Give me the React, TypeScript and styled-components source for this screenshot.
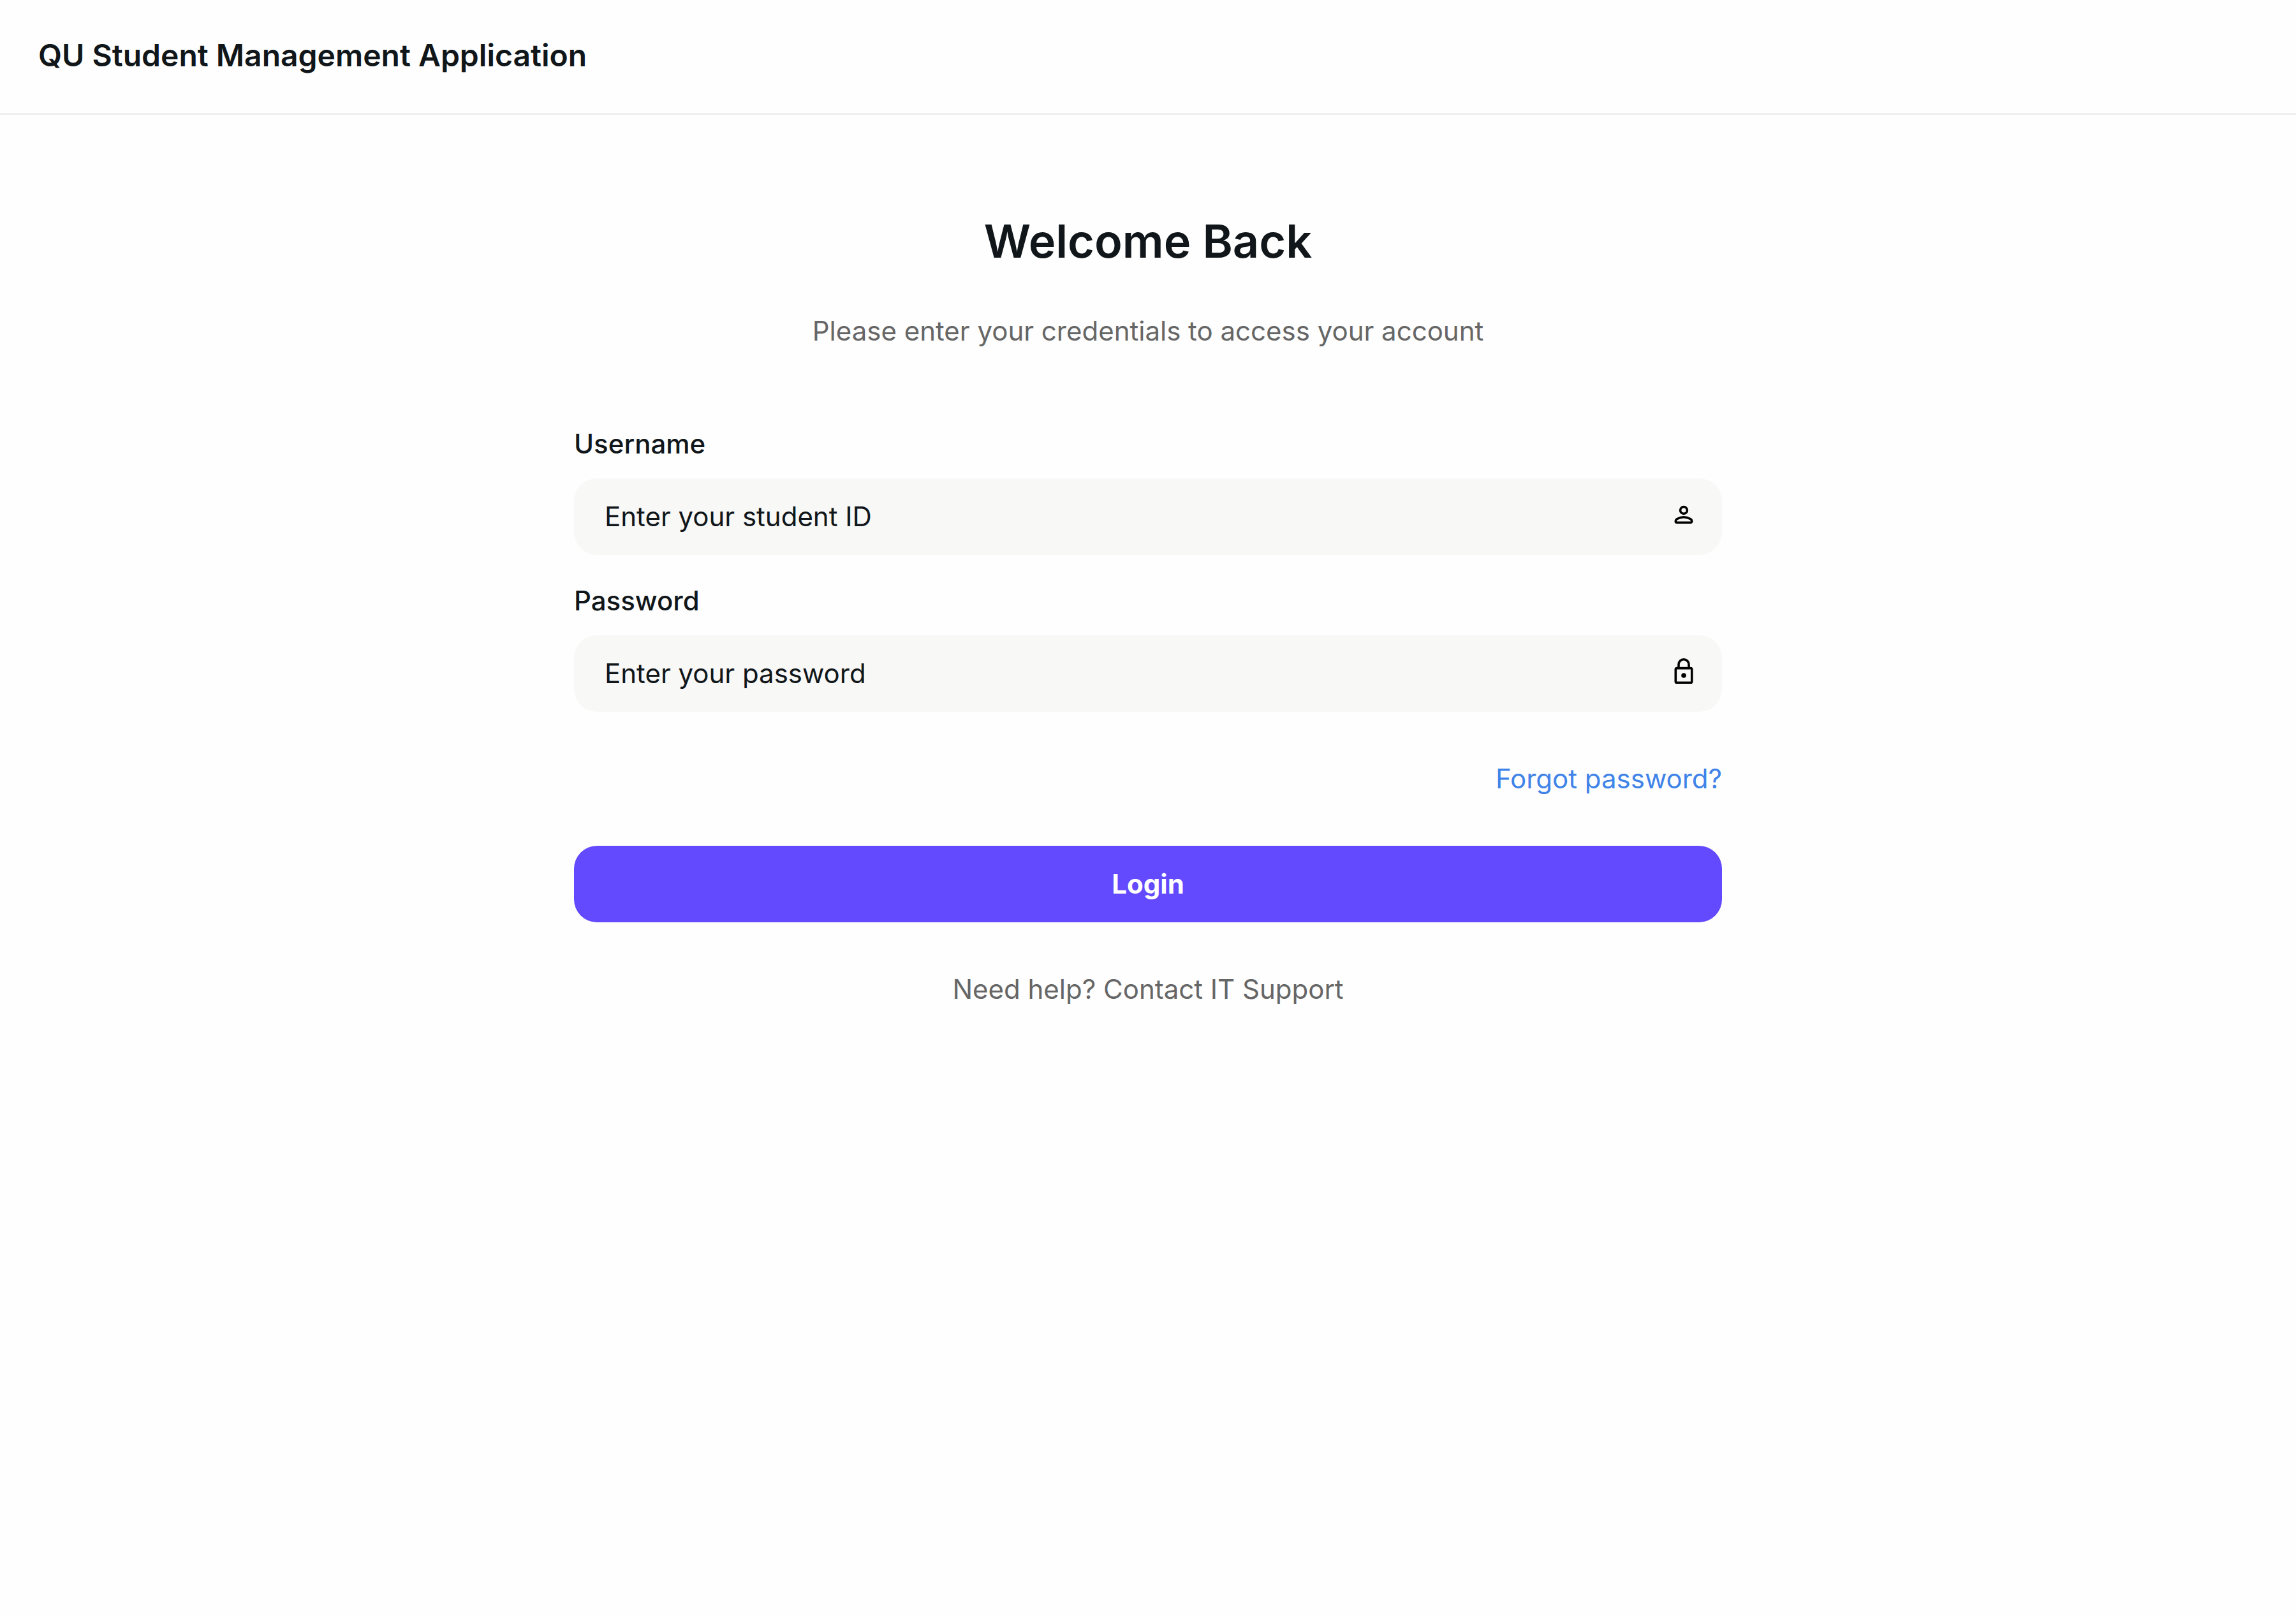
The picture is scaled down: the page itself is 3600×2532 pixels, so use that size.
import React from "react";
import styled, { createGlobalStyle } from "styled-components";

const GlobalStyle = createGlobalStyle`
  *, *::before, *::after { box-sizing: border-box; }
  body {
    margin: 0;
    background: #fefefe;
    color: #101619;
    font-family: Inter, "Liberation Sans", sans-serif;
    font-size: 42px;
    line-height: 60px;
  }
`;

const Header = styled.header`
  padding: 57px 60px 60px;
  border-bottom: 3px solid #f0f0f0;
`;

const AppName = styled.p`
  margin: 0;
  font-size: 48px;
  line-height: 60px;
  font-weight: 600;
`;

const Main = styled.main`
  width: 50%;
  margin: 0 auto;
  padding: 156px 0;
`;

const Title = styled.h1`
  margin: 0 0 69px;
  font-size: 72px;
  line-height: 84px;
  font-weight: 600;
  text-align: center;
`;

const Note = styled.p`
  margin: 0;
  color: #666666;
  text-align: center;
`;

const Form = styled.form`
  display: flex;
  flex-direction: column;
  gap: 75px;
  margin: 117px 0 75px;
`;

const Fields = styled.div`
  display: grid;
  gap: 42px;
`;

const Field = styled.div`
  display: grid;
  gap: 24px;
`;

const Label = styled.label`
  font-weight: 500;
`;

const InputBox = styled.div`
  display: flex;
  align-items: center;
  height: 120px;
  padding: 0 36px 0 48px;
  border-radius: 36px;
  background: #f8f8f7;
`;

const Input = styled.input`
  flex: 1;
  min-width: 0;
  padding: 0;
  border: 0;
  outline: 0;
  background: transparent;
  color: inherit;
  font: inherit;
  &::placeholder { color: #101619; opacity: 1; }
`;

const Icon = styled.svg`
  flex: none;
  width: 48px;
  height: 48px;
  fill: none;
  stroke: #000000;
`;

const ForgotLink = styled.a`
  align-self: flex-end;
  color: #4083e8;
  text-decoration: none;
`;

const LoginButton = styled.button`
  height: 120px;
  padding: 0;
  border: 0;
  border-radius: 36px;
  background: #634aff;
  color: #ffffff;
  font: inherit;
  font-weight: 700;
  cursor: pointer;
`;

function PersonIcon() {
  return (
    <Icon viewBox="0 0 48 48" strokeWidth="3.6" aria-hidden="true">
      <circle cx="24" cy="14" r="5.4" />
      <path d="M11.3 31.5a4.5 4.5 0 0 1 2.4-4C20 24 28 24 34.3 27.5a4.5 4.5 0 0 1 2.4 4a1.8 1.8 0 0 1-1.8 1.8H13.1a1.8 1.8 0 0 1-1.8-1.8Z" />
    </Icon>
  );
}

function LockIcon() {
  return (
    <Icon viewBox="0 0 48 48" strokeWidth="3.6" aria-hidden="true">
      <rect x="11.3" y="15.6" width="25.4" height="22.6" rx="1.8" />
      <path d="M16 15.6V9.8a8 8 0 0 1 16 0v5.8" />
      <circle cx="24" cy="27" r="3.8" fill="#000000" stroke="none" />
    </Icon>
  );
}

export default function App() {
  return (
    <>
      <GlobalStyle />
      <Header>
        <AppName>QU Student Management Application</AppName>
      </Header>
      <Main>
        <Title>Welcome Back</Title>
        <Note>Please enter your credentials to access your account</Note>
        <Form onSubmit={(event) => event.preventDefault()}>
          <Fields>
            <Field>
              <Label htmlFor="username">Username</Label>
              <InputBox>
                <Input id="username" type="text" placeholder="Enter your student ID" />
                <PersonIcon />
              </InputBox>
            </Field>
            <Field>
              <Label htmlFor="password">Password</Label>
              <InputBox>
                <Input id="password" type="password" placeholder="Enter your password" />
                <LockIcon />
              </InputBox>
            </Field>
          </Fields>
          <ForgotLink href="#forgot">Forgot password?</ForgotLink>
          <LoginButton type="submit">Login</LoginButton>
        </Form>
        <Note>Need help? Contact IT Support</Note>
      </Main>
    </>
  );
}
